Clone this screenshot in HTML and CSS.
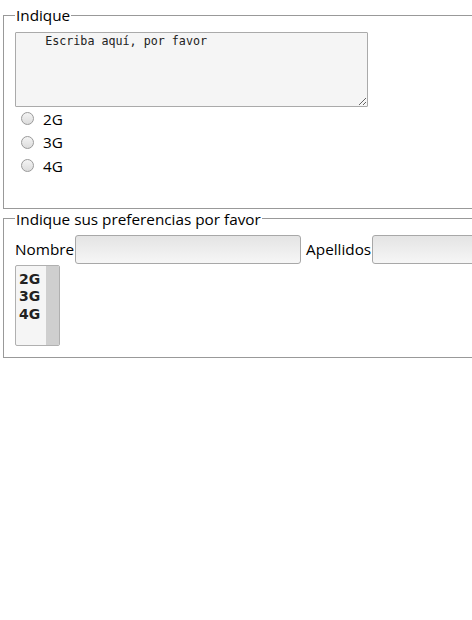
FILE: index.html
```html
<!DOCTYPE html>
<html lang="es">
<head>
<meta charset="utf-8">
<link rel="stylesheet" href="styles.css">
</head>
<body>
<form class="form">
  <fieldset class="group group-first">
    <legend class="legend">Indique</legend>
    <textarea class="area">    Escriba aquí, por favor</textarea>
    <div class="radios">
      <label class="radio-row"><input type="radio" name="g" class="radio"> 2G</label>
      <label class="radio-row"><input type="radio" name="g" class="radio"> 3G</label>
      <label class="radio-row"><input type="radio" name="g" class="radio"> 4G</label>
    </div>
  </fieldset>
  <fieldset class="group group-second">
    <legend class="legend">Indique sus preferencias por favor</legend>
    <div class="names">
      <label class="name-label">Nombre</label><input class="text" type="text">
      <label class="name-label name-gap">Apellidos</label><input class="text" type="text">
    </div>
    <div class="list">
      <div class="list-items">
        <div class="list-item">2G</div>
        <div class="list-item">3G</div>
        <div class="list-item">4G</div>
      </div>
      <div class="list-bar"></div>
    </div>
  </fieldset>
</form>
</body>
</html>
```
FILE: styles.css
```css
html, body {
  margin: 0;
  padding: 0;
  overflow: hidden;
  background: #fff;
}
body {
  font-family: "Open Sans", "Noto Sans", sans-serif;
  font-size: 15.3px;
  color: #000;
}
.form {
  width: 620px;
  padding: 5px 0 0 3px;
}
.group {
  margin: 0;
  border: 1px solid #999;
  min-width: 0;
}
.group-first {
  padding: 7px 11px 30px 11px;
}
.group-second {
  padding: 6px 11px 11px 11px;
}
.legend {
  padding: 0 1px;
  font-size: 15.3px;
  line-height: 20px;
}
.area {
  display: block;
  box-sizing: border-box;
  width: 353px;
  height: 75px;
  margin: 0;
  border: 1px solid #aaa;
  border-radius: 1px;
  background: #f5f5f5;
  font-family: "DejaVu Sans Mono", monospace;
  font-size: 11.7px;
  line-height: 14px;
  padding: 1px 1px;
  color: #222;
}
.radios {
  display: flex;
  flex-direction: column;
}
.radio-row {
  display: flex;
  align-items: center;
  height: 23.5px;
  gap: 9px;
  padding-left: 6px;
}
.radio {
  appearance: none;
  -webkit-appearance: none;
  margin: 0;
  width: 13px;
  height: 13px;
  border: 1px solid #9a9a9a;
  border-radius: 50%;
  background: linear-gradient(#f4f4f4, #dcdcdc);
  box-sizing: border-box;
}
.names {
  display: flex;
  align-items: center;
  height: 29px;
}
.name-gap {
  margin-left: 5px;
}
.text {
  box-sizing: border-box;
  width: 226px;
  height: 29px;
  margin: 0 0 0 1px;
  border: 1px solid #a8a8a8;
  border-radius: 3px;
  background: linear-gradient(#e4e4e4, #f6f6f6);
}
.list {
  display: flex;
  box-sizing: border-box;
  width: 45px;
  height: 81px;
  margin-top: 1px;
  border: 1px solid #b0b0b0;
  border-radius: 2px;
  background: #f5f5f5;
  overflow: hidden;
}
.list-items {
  flex: 1;
  padding: 5px 0 0 3px;
}
.list-item {
  font-family: "DejaVu Sans", sans-serif;
  font-weight: 700;
  font-size: 14px;
  line-height: 17.5px;
  color: #222;
}
.list-bar {
  width: 13px;
  background: #cfcfcf;
}
```
